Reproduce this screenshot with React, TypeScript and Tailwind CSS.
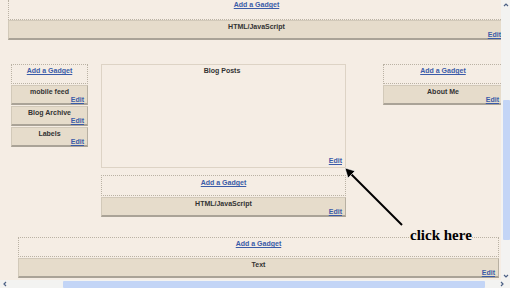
import React from "react";

const link = "text-[#3a5ba8] font-bold underline leading-[7px] text-[7px]";

function AddGadget({ className = "", top = false }: { className?: string; top?: boolean }) {
	return (
		<div
			className={`border-dotted border-[#bab2a4] ${
				top ? "border-x border-b pt-[1px]" : "border pt-[2px]"
			} flex justify-center ${className}`}
		>
			<span className={link}>Add a Gadget</span>
		</div>
	);
}

function Widget({ title, className = "" }: { title: string; className?: string }) {
	return (
		<div
			className={`h-[20px] flex flex-col bg-[#e6dccb] border border-[#d2c9b9] border-b-2 border-b-[#aaa397] border-r-[#b8b0a2] ${className}`}
		>
			<div className="text-center font-bold text-[7px] leading-[7px] text-[#333] pt-[2px]">
				{title}
			</div>
			<div className="mt-auto flex justify-end pr-[3px]">
				<span className={link}>Edit</span>
			</div>
		</div>
	);
}

function Chevron({ dir }: { dir: "up" | "down" | "left" | "right" }) {
	const d = {
		up: "M1 4 L3 2 L5 4",
		down: "M1 2 L3 4 L5 2",
		left: "M4 1 L2 3 L4 5",
		right: "M2 1 L4 3 L2 5",
	}[dir];
	return (
		<svg width="6" height="6" viewBox="0 0 6 6">
			<path d={d} fill="none" stroke="#4d6185" strokeWidth="1.2" />
		</svg>
	);
}

export default function App() {
	return (
		<div className="w-[510px] h-[288px] flex flex-col overflow-hidden bg-[#f5ede4] relative font-['Liberation_Sans',Arial,sans-serif]">
			<div className="flex h-[280px]">
				{/* PAGE LAYOUT */}
				<div className="w-[501px] h-full overflow-hidden flex flex-col">
					<div className="ml-[8px] w-[497px] shrink-0">
						<AddGadget top className="h-[20px]" />
						<Widget title="HTML/JavaScript" />
					</div>

					<div className="flex items-start mt-[24px] shrink-0">
						<div className="ml-[11px] w-[77px] shrink-0 flex flex-col gap-[1px]">
							<AddGadget className="h-[20px]" />
							<Widget title="mobile feed" />
							<Widget title="Blog Archive" />
							<Widget title="Labels" />
						</div>

						<div className="ml-[13px] w-[245px] shrink-0 flex flex-col">
							<div className="h-[104px] border border-[#ddd3c5] flex flex-col pt-[2px] pb-[3px] pr-[3px]">
								<div className="text-center font-bold text-[7px] leading-[7px] text-[#333]">
									Blog Posts
								</div>
								<div className="mt-auto flex justify-end">
									<span className={link}>Edit</span>
								</div>
							</div>
							<AddGadget className="h-[21px] mt-[7px] pt-[3px]" />
							<Widget title="HTML/JavaScript" className="mt-[1px]" />
						</div>

						<div className="ml-[37px] w-[120px] shrink-0 flex flex-col gap-[1px]">
							<AddGadget className="h-[20px]" />
							<Widget title="About Me" />
						</div>
					</div>

					<div className="ml-[18px] w-[481px] mt-[20px] shrink-0 flex flex-col gap-[1px]">
						<AddGadget className="h-[20px]" />
						<Widget title="Text" />
					</div>
				</div>

				{/* VERTICAL SCROLLBAR */}
				<div className="w-[9px] h-full bg-[#f3f3f1] flex flex-col items-center">
					<div className="h-[9px] flex items-center justify-center">
						<Chevron dir="up" />
					</div>
					<div className="mt-[91px] h-[140px] w-[7px] ml-[2px] bg-[#c3d5f6] rounded-[1px]" />
					<div className="mt-auto h-[9px] flex items-center justify-center">
						<Chevron dir="down" />
					</div>
				</div>
			</div>

			{/* HORIZONTAL SCROLLBAR */}
			<div className="h-[8px] bg-[#f3f3f1] flex items-center">
				<div className="w-[9px] flex justify-center">
					<Chevron dir="left" />
				</div>
				<div className="ml-[54px] w-[422px] h-[7px] mt-[1px] bg-[#c3d5f6] rounded-[1px]" />
				<div className="ml-[12px] w-[9px] flex justify-center">
					<Chevron dir="right" />
				</div>
			</div>

			{/* ANNOTATION */}
			<svg className="absolute left-0 top-0 pointer-events-none" width="510" height="288">
				<line x1="350" y1="173" x2="402" y2="225" stroke="#000" strokeWidth="2" />
				<polygon points="345,168 355,171 348,178" fill="#000" stroke="#fff" strokeWidth="0.6" />
			</svg>
			<span className="absolute left-[410px] top-[226px] font-['Liberation_Serif',serif] font-bold text-[15px] leading-[18px] text-black bg-[#f5ede4]">
				click here
			</span>
		</div>
	);
}
